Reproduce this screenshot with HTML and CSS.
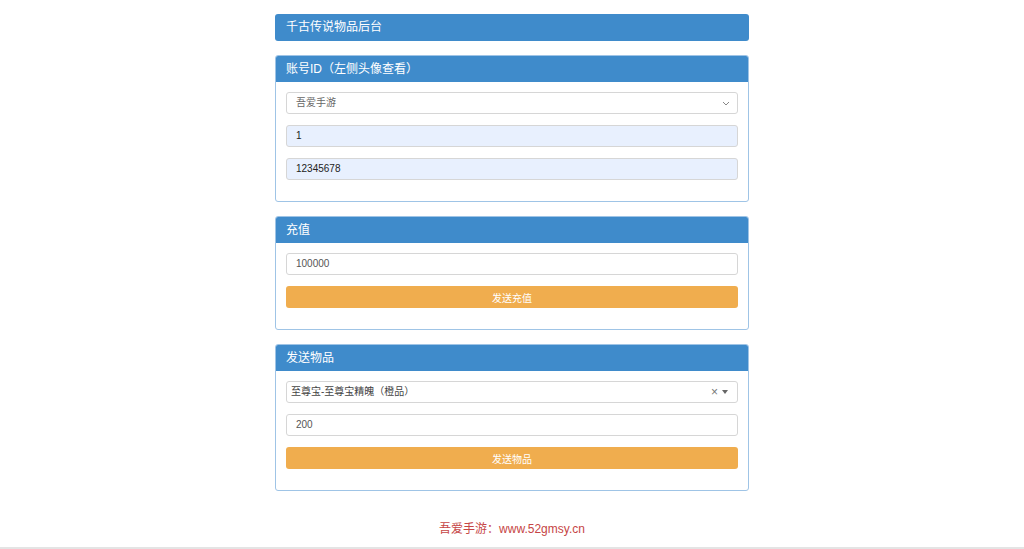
FILE: index.html
```html
<!DOCTYPE html>
<html lang="zh-CN">
<head>
    <meta charset="UTF-8">
    <meta name="viewport" content="width=device-width, initial-scale=1.0">
    <title>千古传说物品后台</title>
    <link rel="stylesheet" href="styles.css">
</head>
<body>
    <div class="container">
        <!-- 标题 -->
        <div class="title-bar">千古传说物品后台</div>

        <!-- 账号 -->
        <div class="panel">
            <div class="panel-heading">账号ID（左侧头像查看）</div>
            <div class="panel-body">
                <div class="select-box">
                    <span>吾爱手游</span>
                    <svg class="chevron" width="8" height="5" viewBox="0 0 8 5"><path d="M1 1l3 3 3-3" fill="none" stroke="#888" stroke-width="1"/></svg>
                </div>
                <div class="field filled">1</div>
                <div class="field filled">12345678</div>
            </div>
        </div>

        <!-- 充值 -->
        <div class="panel">
            <div class="panel-heading">充值</div>
            <div class="panel-body">
                <div class="field">100000</div>
                <button class="btn-warning">发送充值</button>
            </div>
        </div>

        <!-- 发送物品 -->
        <div class="panel">
            <div class="panel-heading">发送物品</div>
            <div class="panel-body">
                <div class="select-box item-select">
                    <span>至尊宝-至尊宝精魄（橙品）</span>
                    <span class="select-tools">
                        <span class="clear">×</span>
                        <span class="caret"></span>
                    </span>
                </div>
                <div class="field">200</div>
                <button class="btn-warning">发送物品</button>
            </div>
        </div>

        <div class="footer">吾爱手游：www.52gmsy.cn</div>
    </div>
    <div class="bottom-line"></div>
</body>
</html>
```

FILE: styles.css
```css
/* General Styling for the Page */
body {
    font-family: "Liberation Sans", "Noto Sans CJK SC", sans-serif;
    background-color: #ffffff;
    margin: 0;
    padding: 0;
    color: #333;
}

.container {
    width: 474px;
    margin: 0 auto;
    padding-top: 14px;
    display: flex;
    flex-direction: column;
    gap: 14px;
}

.title-bar {
    background-color: #3f8bcb;
    color: white;
    border-radius: 3px;
    height: 27px;
    line-height: 27px;
    padding: 0 11px;
    font-size: 12px;
    box-sizing: border-box;
}

.panel {
    border: 1px solid #9fc4e6;
    border-radius: 3px;
    overflow: hidden;
}

.panel-heading {
    background-color: #3f8bcb;
    color: white;
    height: 26px;
    line-height: 26px;
    padding: 0 10px;
    font-size: 12px;
}

.panel-body {
    padding: 10px 10px 21px;
    display: flex;
    flex-direction: column;
    gap: 11px;
}

.field,
.select-box {
    height: 22px;
    border: 1px solid #d6d6d6;
    border-radius: 3px;
    box-sizing: border-box;
    font-size: 10px;
    line-height: 20px;
    padding: 0 9px;
    color: #555;
    background-color: white;
}

.field.filled {
    background-color: #e8f0fe;
    color: #222;
}

.select-box {
    display: flex;
    justify-content: space-between;
    align-items: center;
    color: #666;
}

.chevron {
    margin-right: -2px;
}

/* select2 style dropdown */
.item-select {
    padding-left: 4px;
    color: #444;
}

.select-tools {
    display: flex;
    align-items: center;
    gap: 4px;
    color: #777;
    font-size: 12px;
}

.caret {
    width: 0;
    height: 0;
    border-left: 3px solid transparent;
    border-right: 3px solid transparent;
    border-top: 4px solid #666;
}

.btn-warning {
    height: 22px;
    border: none;
    border-radius: 3px;
    background-color: #f0ad4e;
    color: white;
    font-family: inherit;
    font-size: 10px;
    cursor: pointer;
}

.footer {
    text-align: center;
    color: #c64545;
    font-size: 12px;
    padding-top: 14px;
}

.bottom-line {
    position: fixed;
    left: 0;
    right: 0;
    bottom: 0;
    height: 2px;
    background-color: #e4e4e4;
}
```
